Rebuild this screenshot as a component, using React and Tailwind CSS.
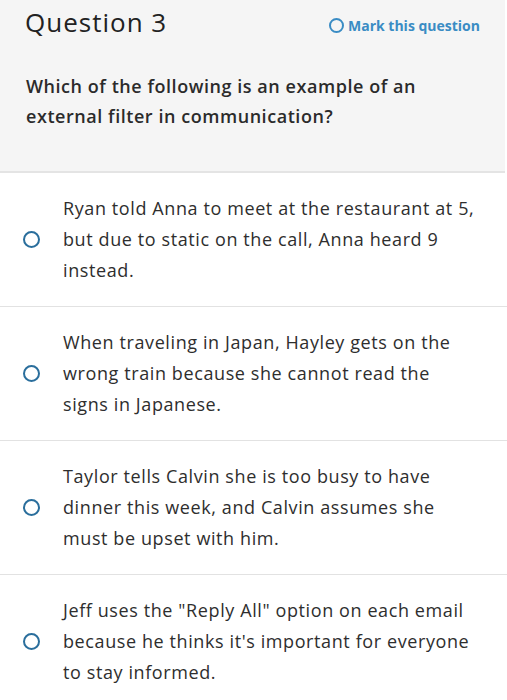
import React from "react";

const options = [
  "Ryan told Anna to meet at the restaurant at 5, but due to static on the call, Anna heard 9 instead.",
  "When traveling in Japan, Hayley gets on the wrong train because she cannot read the signs in Japanese.",
  "Taylor tells Calvin she is too busy to have dinner this week, and Calvin assumes she must be upset with him.",
  'Jeff uses the "Reply All" option on each email because he thinks it\'s important for everyone to stay informed.',
];

const App = () => {
  return (
    <div className="w-[507px] h-[700px] bg-white overflow-hidden font-['Open_Sans',sans-serif] text-[#2e2e2e]">
      <div className="w-[505px] bg-[#f5f5f5] border-b-2 border-[#e4e4e4] pb-[40px]">
        <div className="flex items-center justify-between pl-[25px] pr-[25px] pt-[6px]">
          <h1 className="text-[26px] leading-[32px] tracking-[1px] text-[#222222]">Question 3</h1>
          <button className="flex items-center gap-[4px] mt-[6px] text-[14px] font-bold text-[#3a8cc4]">
            <span className="w-[15px] h-[15px] rounded-full border-2 border-[#3a8cc4]" />
            Mark this question
          </button>
        </div>
        <p className="mt-[33px] pl-[26px] pr-[70px] text-[18px] leading-[30px] tracking-[0.55px] font-semibold text-[#2b2b2b]">
          Which of the following is an example of an external filter in communication?
        </p>
      </div>
      {options.map((text, i) => (
        <div
          key={i}
          className="flex items-center border-b border-[#e2e2e2] pt-[20px] pb-[20px]"
        >
          <div className="w-[63px] flex justify-center shrink-0">
            <span className="w-[17px] h-[17px] rounded-full border-2 border-[#2a6e9c]" />
          </div>
          <p className="pr-[28px] text-[18px] leading-[31px] tracking-[0.6px]">{text}</p>
        </div>
      ))}
    </div>
  );
};

export default App;
